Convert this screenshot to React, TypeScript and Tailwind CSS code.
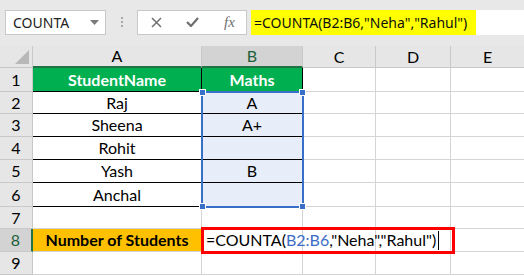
import React from 'react';

const cellFont = { fontFamily: 'Lato, "Liberation Sans", sans-serif' };

interface Row {
  n: number;
  h: string;
  a?: string;
  b?: string;
}

const rows: Row[] = [
  { n: 1, h: 'h-[24px]', a: 'StudentName', b: 'Maths' },
  { n: 2, h: 'h-[22px]', a: 'Raj', b: 'A' },
  { n: 3, h: 'h-[23px]', a: 'Sheena', b: 'A+' },
  { n: 4, h: 'h-[23px]', a: 'Rohit', b: '' },
  { n: 5, h: 'h-[23px]', a: 'Yash', b: 'B' },
  { n: 6, h: 'h-[24px]', a: 'Anchal', b: '' },
  { n: 7, h: 'h-[22px]' },
  { n: 8, h: 'h-[23px]' },
  { n: 9, h: 'h-[23px]' },
];

const Handle = ({ className }: { className: string }) => (
  <div className={`absolute w-[7px] h-[7px] bg-[#3a6fc8] border border-white ${className}`} />
);

export default function App() {
  return (
    <div className="w-[524px] h-[276px] overflow-hidden bg-white text-black select-none">
      {/* formula bar */}
      <div className="h-[46px] bg-[#e8e8e8] flex items-center pl-[5px] pb-[2px]">
        <div className="w-[101px] h-[25px] bg-white border border-[#c8c8c8] flex items-center justify-between pl-[7px] pr-[6px]">
          <span className="text-[14px] text-[#222]" style={{ fontFamily: '"Noto Sans", sans-serif' }}>COUNTA</span>
          <svg width="9" height="5" viewBox="0 0 9 5"><path d="M0 0h9L4.5 5z" fill="#7a7a7a" /></svg>
        </div>
        <div className="w-[31px] flex flex-col items-center gap-[2px]">
          <div className="w-[2px] h-[2px] bg-[#a8a8a8]" />
          <div className="w-[2px] h-[2px] bg-[#a8a8a8]" />
          <div className="w-[2px] h-[2px] bg-[#a8a8a8]" />
        </div>
        <div className="w-[110px] h-[25px] bg-white border border-[#c8c8c8] flex items-center">
          <svg className="ml-[13px]" width="11" height="11" viewBox="0 0 11 11">
            <path d="M1 1l9 9M10 1l-9 9" stroke="#6f6f6f" strokeWidth="1.5" />
          </svg>
          <svg className="ml-[24px]" width="13" height="10" viewBox="0 0 13 10">
            <path d="M1 5l4 4 7-8" stroke="#6f6f6f" strokeWidth="2.2" fill="none" />
          </svg>
          <span className="ml-[25px] text-[15px] italic text-[#6f6f6f] leading-none" style={{ fontFamily: '"Liberation Serif", serif' }}>fx</span>
        </div>
        <div className="ml-[4px] flex-1 h-[25px] bg-white flex items-center">
          <div className="h-[25px] w-[225px] bg-[#ffff00] flex items-center pl-[3px] text-[14px] text-[#111]" style={{ fontFamily: '"Noto Sans", sans-serif' }}>
            =COUNTA(B2:B6,"Neha","Rahul")
          </div>
        </div>
      </div>

      {/* sheet */}
      <div className="relative" style={cellFont}>
        {/* column headers */}
        <div className="flex h-[22px] bg-[#e6e6e6] text-[16px]">
          <div className="w-[33px] border-r border-b border-[#c8c8c8] relative">
            <svg className="absolute right-[3px] bottom-[3px]" width="14" height="14" viewBox="0 0 14 14"><path d="M14 0v14H0z" fill="#b8b8b8" /></svg>
          </div>
          <div className="w-[169px] border-r border-[#c8c8c8] border-b-2 border-b-[#217346] flex items-center justify-center">A</div>
          <div className="w-[101px] bg-[#d3d3d3] border-r border-[#c8c8c8] border-b-2 border-b-[#217346] flex items-center justify-center text-[#1e5e3a]">B</div>
          <div className="w-[73px] border-r border-b border-[#c8c8c8] flex items-center justify-center">C</div>
          <div className="w-[75px] border-r border-b border-[#c8c8c8] flex items-center justify-center">D</div>
          <div className="flex-1 border-b border-[#c8c8c8] flex items-center justify-center">E</div>
        </div>

        {rows.map((r) => {
          const inTable = r.n <= 6;
          const head = r.n === 1;
          const line = inTable ? 'border-black' : 'border-[#d4d4d4]';
          return (
            <div key={r.n} className={`flex ${r.h} text-[16px]`}>
              <div
                className={`w-[33px] flex items-center justify-center border-b border-[#c8c8c8] ${
                  r.n === 8 ? 'bg-[#d3d3d3] text-[#1e5e3a] border-r-2 border-r-[#217346]' : 'bg-[#e6e6e6] border-r'
                }`}
              >
                {r.n}
              </div>
              {r.n === 8 ? (
                <div className="w-[169px] bg-[#ffc000] border-r border-b border-[#d4d4d4] flex items-center justify-center font-bold">
                  Number of Students
                </div>
              ) : (
                <div
                  className={`w-[169px] flex items-center justify-center border-r border-b ${line} ${
                    head ? 'bg-[#00b050] text-white font-bold' : ''
                  }`}
                >
                  {r.a}
                </div>
              )}
              {r.n === 8 ? (
                <div className="w-[101px] border-r border-b border-[#d4d4d4] relative">
                  <div className="absolute left-[4px] top-0 h-full flex items-center whitespace-nowrap z-20">
                    =COUNTA(<span className="text-[#3c6dc5]">B2:B6</span>,"Neha","Rahul")
                    <span className="ml-[2px] w-[1px] h-[19px] bg-black" />
                  </div>
                </div>
              ) : (
                <div
                  className={`w-[101px] flex items-center justify-center border-b ${
                    inTable ? 'border-black border-r' : 'border-r border-[#d4d4d4]'
                  } ${head ? 'bg-[#00b050] text-white font-bold' : ''} ${
                    inTable && !head ? 'bg-[#e8eef9]' : ''
                  }`}
                >
                  {r.b}
                </div>
              )}
              <div className="w-[73px] border-r border-b border-[#d4d4d4]" />
              <div className="w-[75px] border-r border-b border-[#d4d4d4]" />
              <div className="flex-1 border-b border-[#d4d4d4]" />
            </div>
          );
        })}

        {/* selection B2:B6 */}
        <div className="absolute left-[201px] top-[45px] w-[103px] h-[117px] border-2 border-[#3a6fc8] z-10 pointer-events-none">
          <Handle className="-left-[4px] -top-[4px]" />
          <Handle className="-right-[4px] -top-[4px]" />
          <Handle className="-left-[4px] -bottom-[4px]" />
          <Handle className="-right-[4px] -bottom-[4px]" />
        </div>

        {/* edit box */}
        <div className="absolute left-[201px] top-[181px] w-[254px] h-[27px] border-[3px] border-[#ff0000] z-10 pointer-events-none" />
      </div>
    </div>
  );
}
